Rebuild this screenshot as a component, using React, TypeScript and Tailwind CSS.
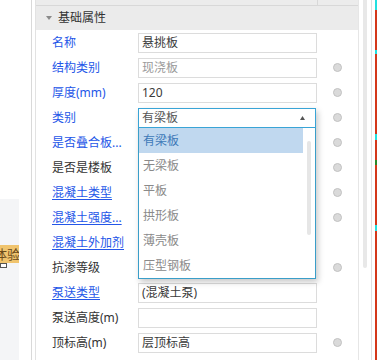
import React from 'react';

type Row = {
  label: string;
  blue?: boolean;
  underline?: boolean;
  value?: string;
  muted?: boolean;
  radio?: boolean;
  covered?: boolean;
};

const rows: Row[] = [
  { label: '名称', blue: true, value: '悬挑板' },
  { label: '结构类别', blue: true, value: '现浇板', muted: true, radio: true },
  { label: '厚度(mm)', blue: true, value: '120', radio: true },
  { label: '类别', blue: true, radio: true, covered: true },
  { label: '是否叠合板...', blue: true, radio: true, covered: true },
  { label: '是否是楼板', radio: true, covered: true },
  { label: '混凝土类型', blue: true, underline: true, radio: true, covered: true },
  { label: '混凝土强度...', blue: true, underline: true, radio: true, covered: true },
  { label: '混凝土外加剂', blue: true, underline: true, covered: true },
  { label: '抗渗等级', radio: true, covered: true },
  { label: '泵送类型', blue: true, underline: true, value: '(混凝土泵)' },
  { label: '泵送高度(m)', value: '' },
  { label: '顶标高(m)', value: '层顶标高', radio: true },
];

const options = ['有梁板', '无梁板', '平板', '拱形板', '薄壳板', '压型钢板'];

const font = { fontFamily: '"Noto Sans", "Noto Sans CJK SC", sans-serif' };

const App: React.FC = () => {
  return (
    <div className="w-[377px] h-[360px] flex bg-white overflow-hidden text-[12px] leading-none" style={font}>
      {/* left strip */}
      <div className="w-[32px] h-full flex flex-col border-r border-[#d9d9d9]">
        <div className="h-[199px] bg-white" />
        <div className="flex-1 w-[19px] bg-[#f4f5f7] pt-[46px]">
          <div className="w-[19px] h-[18px] bg-[#f0c46e] overflow-hidden flex items-center justify-end">
            <span className="text-[13px] text-[#6b4a1a] whitespace-nowrap -mr-[1px]">体验</span>
          </div>
          <div className="w-[7px] h-[5px] border border-[#555] bg-white" />
        </div>
      </div>
      <div className="w-[4px] h-full border-r border-[#e2e2e2]" />

      {/* property panel */}
      <div className="relative w-[323px] h-full border-r border-[#e6e6e6] flex flex-col">
        <div className="h-[6px] flex bg-[#ececec] border-b border-[#d8d8d8]">
          <div className="w-[282px] border-r border-[#d8d8d8]" />
          <div className="flex-1" />
        </div>
        <div className="h-[24px] bg-[#ebebeb] flex items-center pl-[10px] gap-[6px]">
          <svg width="6" height="4" viewBox="0 0 6 4">
            <path d="M0 0 L6 0 L3 4 Z" fill="#8a8a8a" />
          </svg>
          <span className="text-[#333] text-[12px]">基础属性</span>
        </div>
        {rows.map((r) => (
          <div key={r.label} className="h-[25px] flex items-center shrink-0">
            <div className="w-[102px] pl-[16px] whitespace-nowrap">
              <span
                className={
                  (r.blue ? 'text-[#2456e8] ' : 'text-[#333] ') +
                  (r.underline ? 'underline underline-offset-2 decoration-[#2456e8]' : '')
                }
              >
                {r.label}
              </span>
            </div>
            <div className="w-[179px] h-[20px]">
              {!r.covered && (
                <div
                  className={
                    'h-full border border-[#dcdcdc] bg-white flex items-center pl-[3px] ' +
                    (r.muted ? 'text-[#9a9a9a]' : 'text-[#3a3a3a]')
                  }
                >
                  {r.value}
                </div>
              )}
            </div>
            <div className="flex-1 flex justify-center pr-[1px]">
              {r.radio && <div className="w-[9px] h-[9px] rounded-full bg-[#dadada] border border-[#c2c2c2]" />}
            </div>
          </div>
        ))}

        {/* open select with dropdown */}
        <div className="absolute left-[102px] top-[108px] w-[178px] shadow-[2px_3px_6px_rgba(0,0,0,0.22)]">
          <div className="h-[20px] border border-[#39a4d6] bg-white flex items-center justify-between pl-[3px] pr-[10px] text-[#555]">
            <span>有梁板</span>
            <svg width="5" height="4" viewBox="0 0 5 4">
              <path d="M0 4 L5 4 L2.5 0 Z" fill="#555" />
            </svg>
          </div>
          <div className="relative h-[151px] border-x border-b border-[#3a9ec9] bg-white">
            {options.map((o, i) => (
              <div
                key={o}
                className={
                  'h-[25px] w-[164px] flex items-center pl-[4px] ' +
                  (i === 0 ? 'bg-[#c0d8ef] text-[#3d78b8]' : 'text-[#8a8a8a]')
                }
              >
                {o}
              </div>
            ))}
            <div className="absolute left-[168px] top-[13px] w-[4px] h-[94px] rounded-full bg-[#e6e6e6]" />
          </div>
        </div>
      </div>

      {/* outer scrollbar and edge */}
      <div className="w-[4px] h-full" />
      <div className="w-[4px] h-full">
        <div className="h-[268px] rounded-b-full bg-[#e8e8e8]" />
      </div>
      <div className="w-[4px] h-full" />
      <div className="w-[1px] h-full bg-[#e0e0e0]" />
      <div className="w-[3px] h-full" />
      <div className="w-[2px] h-full flex flex-col bg-[#d4381a]">
        <div className="h-[10px] bg-[#22e0e0]" />
        <div className="h-[40px]" />
        <div className="h-[4px] bg-[#22e0e0]" />
        <div className="h-[80px]" />
        <div className="h-[6px] bg-[#22e0e0]" />
        <div className="h-[20px]" />
        <div className="h-[5px] bg-[#2a8a2a]" />
        <div className="h-[60px]" />
        <div className="h-[6px] bg-[#22e0e0]" />
      </div>
    </div>
  );
};

export default App;
